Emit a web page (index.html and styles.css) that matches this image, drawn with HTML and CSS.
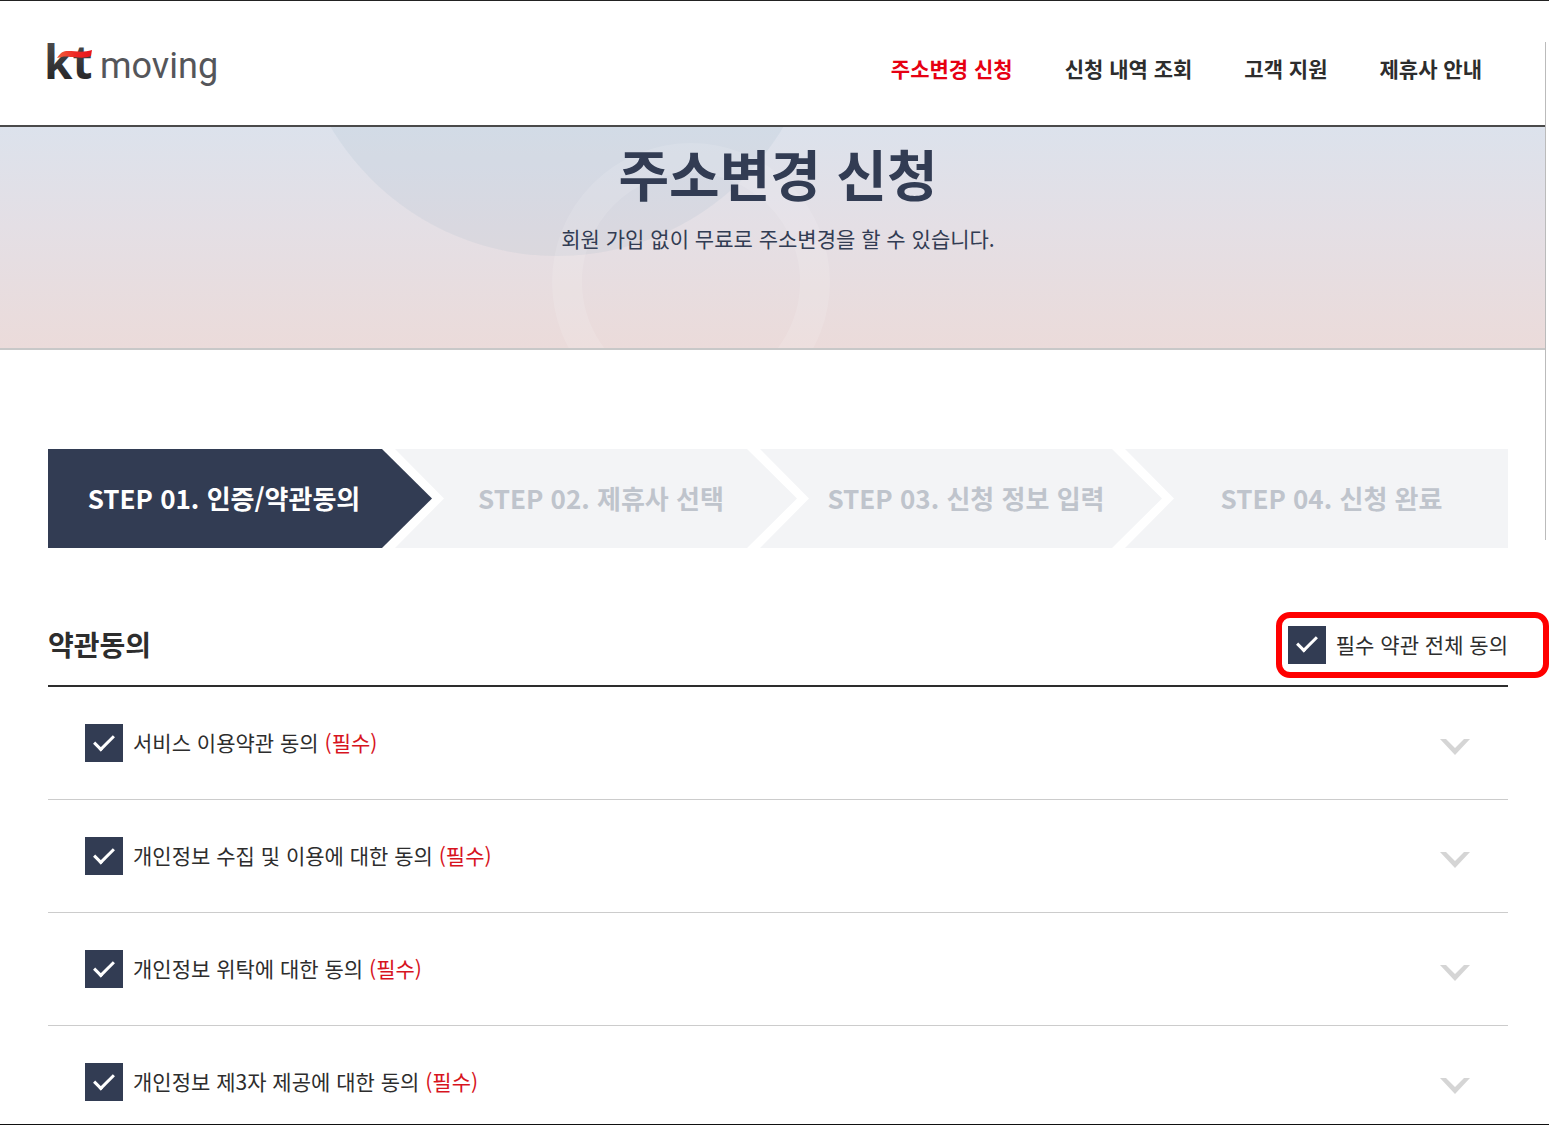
FILE: index.html
```html
<!DOCTYPE html>
<html lang="ko">
<head>
  <meta charset="UTF-8" />
  <meta name="viewport" content="width=device-width, initial-scale=1.0"/>
  <title>주소변경 신청 | kt moving</title>
  <link rel="stylesheet" href="styles.css">
</head>
<body>
  <div class="page">
    <header class="header">
      <a href="#" class="logo" aria-label="kt moving">
        <svg width="184" height="70" viewBox="0 0 184 70">
          <defs>
            <linearGradient id="ktBlack" x1="0" y1="0" x2="0" y2="1">
              <stop offset="0" stop-color="#555557"/>
              <stop offset="1" stop-color="#1c1c1e"/>
            </linearGradient>
            <linearGradient id="ktRed" x1="0" y1="0" x2="1" y2="0">
              <stop offset="0" stop-color="#f0603c"/>
              <stop offset="0.5" stop-color="#ee2a24"/>
              <stop offset="1" stop-color="#e8141c"/>
            </linearGradient>
          </defs>
          <text class="logo-kt" x="6" y="49" fill="url(#ktBlack)">kt</text>
          <path d="M19 28C23 22 25 21 30 21C38 21 45 23 54 20L53 26C46 29 38 27 32 27C27 26 24 27 19 28Z" fill="url(#ktRed)"/>
          <text class="logo-moving" x="62" y="48">moving</text>
        </svg>
      </a>
      <nav class="nav">
        <a href="#" class="active">주소변경 신청</a>
        <a href="#">신청 내역 조회</a>
        <a href="#">고객 지원</a>
        <a href="#">제휴사 안내</a>
      </nav>
    </header>

    <section class="visual">
      <svg class="visual-bg" width="1546" height="221" viewBox="0 0 1546 221" aria-hidden="true">
        <circle cx="557" cy="-134" r="263" fill="#7098b0" fill-opacity="0.09"/>
        <circle cx="691" cy="155" r="124" fill="none" stroke="#ffffff" stroke-opacity="0.12" stroke-width="30"/>
      </svg>
      <h1>주소변경 신청</h1>
      <p>회원 가입 없이 무료로 주소변경을 할 수 있습니다.</p>
    </section>

    <main class="content">
      <ol class="steps">
        <li class="step on">STEP 01. 인증/약관동의</li>
        <li class="step">STEP 02. 제휴사 선택</li>
        <li class="step">STEP 03. 신청 정보 입력</li>
        <li class="step">STEP 04. 신청 완료</li>
      </ol>

      <div class="terms-head">
        <h2>약관동의</h2>
        <div class="check check-all">
          <input type="checkbox" id="agreeAll" checked>
          <label for="agreeAll">필수 약관 전체 동의</label>
        </div>
      </div>

      <ul class="terms">
        <li>
          <div class="check">
            <input type="checkbox" id="agree1" class="agree" checked>
            <label for="agree1">서비스 이용약관 동의 <em>(필수)</em></label>
          </div>
          <button type="button" class="toggle" aria-label="서비스 이용약관 보기">
            <svg width="30" height="16" viewBox="0 0 30 16"><path d="M0 0H6L15 9L24 0H30L15 16Z"/></svg>
          </button>
        </li>
        <li>
          <div class="check">
            <input type="checkbox" id="agree2" class="agree" checked>
            <label for="agree2">개인정보 수집 및 이용에 대한 동의 <em>(필수)</em></label>
          </div>
          <button type="button" class="toggle" aria-label="개인정보 수집 및 이용 보기">
            <svg width="30" height="16" viewBox="0 0 30 16"><path d="M0 0H6L15 9L24 0H30L15 16Z"/></svg>
          </button>
        </li>
        <li>
          <div class="check">
            <input type="checkbox" id="agree3" class="agree" checked>
            <label for="agree3">개인정보 위탁에 대한 동의 <em>(필수)</em></label>
          </div>
          <button type="button" class="toggle" aria-label="개인정보 위탁 보기">
            <svg width="30" height="16" viewBox="0 0 30 16"><path d="M0 0H6L15 9L24 0H30L15 16Z"/></svg>
          </button>
        </li>
        <li>
          <div class="check">
            <input type="checkbox" id="agree4" class="agree" checked>
            <label for="agree4">개인정보 제3자 제공에 대한 동의 <em>(필수)</em></label>
          </div>
          <button type="button" class="toggle" aria-label="개인정보 제3자 제공 보기">
            <svg width="30" height="16" viewBox="0 0 30 16"><path d="M0 0H6L15 9L24 0H30L15 16Z"/></svg>
          </button>
        </li>
      </ul>
    </main>
  </div>
  <div class="scroll-thumb"></div>

  <script>
    const agreeAll = document.getElementById('agreeAll');
    const agrees = document.querySelectorAll('.agree');

    agreeAll.addEventListener('change', () => {
      agrees.forEach(box => box.checked = agreeAll.checked);
    });

    agrees.forEach(box => box.addEventListener('change', () => {
      agreeAll.checked = [...agrees].every(b => b.checked);
    }));
  </script>
</body>
</html>
```
FILE: styles.css
```css
* {
  box-sizing: border-box;
}

body {
  margin: 0;
  background-color: #fff;
  color: #2d2d2d;
  font-family: 'Noto Sans CJK KR', sans-serif;
  font-size: 21px;
  line-height: 30px;
}

h1, h2, p, ul, ol {
  margin: 0;
  padding: 0;
}

li {
  list-style: none;
}

a {
  color: inherit;
  text-decoration: none;
}

/* scroll area, framed above and below */
.page {
  height: 100vh;
  padding-right: 3px;
  overflow-y: auto;
  scrollbar-width: none;
  border-top: 1px solid #222;
  border-bottom: 1px solid #111;
}

.header {
  display: flex;
  justify-content: space-between;
  align-items: center;
  height: 126px;
  padding: 10px 64px 0 38px;
  border-bottom: 2px solid #4a4a4a;
}

.logo {
  padding-bottom: 6px;
}

.logo svg {
  display: block;
}

.logo-kt {
  font-family: 'Open Sans', sans-serif;
  font-size: 46px;
  font-weight: 700;
}

.logo-moving {
  font-family: Roboto, sans-serif;
  font-size: 36px;
  fill: #55565a;
}

.nav {
  display: flex;
  gap: 52px;
  font-weight: 700;
}

.nav .active {
  color: #e60012;
}

/* top banner */
.visual {
  position: relative;
  height: 223px;
  padding-top: 8px;
  overflow: hidden;
  text-align: center;
  color: #323c53;
  background: linear-gradient(#dce2ec, #e4dfe5 45%, #ebdbda);
  border-bottom: 2px solid #c8c8c8;
}

.visual-bg {
  position: absolute;
  top: 0;
  left: 50%;
  transform: translateX(-50%);
}

.visual h1,
.visual p {
  position: relative;
  padding-left: 10px;
}

.visual h1 {
  font-size: 55px;
  line-height: 74px;
  font-weight: 700;
}

.visual p {
  margin-top: 14px;
}

.content {
  padding: 99px 38px 0 48px;
}

/* steps */
.steps {
  display: flex;
}

.step {
  flex: 1 1 402px;
  height: 99px;
  margin-left: -37px;
  padding: 0 0 2px 10px;
  display: flex;
  justify-content: center;
  align-items: center;
  font-size: 26px;
  font-weight: 700;
  white-space: nowrap;
  color: #bfc4cc;
  background-color: #f3f4f6;
  clip-path: polygon(0 0, calc(100% - 50px) 0, 100% 50%, calc(100% - 50px) 100%, 0 100%, 49px 50%);
}

.step:first-child {
  flex-basis: 384px;
  margin-left: 0;
  padding: 0 32px 2px 0;
  clip-path: polygon(0 0, calc(100% - 50px) 0, 100% 50%, calc(100% - 50px) 100%, 0 100%);
}

.step:last-child {
  flex-basis: 383px;
  padding-left: 30px;
  clip-path: polygon(0 0, 100% 0, 100% 100%, 0 100%, 49px 50%);
}

.step.on {
  color: #fff;
  background-color: #323c53;
}

/* terms */
.terms-head {
  display: flex;
  justify-content: space-between;
  align-items: center;
  margin-top: 56px;
  height: 83px;
  border-bottom: 2px solid #2d2d2d;
}

.terms-head h2 {
  padding-bottom: 2px;
  font-size: 28px;
  font-weight: 700;
}

.check {
  display: flex;
  align-items: center;
  gap: 10px;
}

.check input {
  appearance: none;
  width: 38px;
  height: 38px;
  margin: 0;
  display: grid;
  place-items: center;
  border: 1px solid #323c53;
  cursor: pointer;
}

.check input:checked {
  background-color: #323c53;
}

.check input:checked::after {
  content: "";
  width: 17px;
  height: 8px;
  margin-bottom: 6px;
  border-left: 3px solid #fff;
  border-bottom: 3px solid #fff;
  transform: rotate(-45deg);
}

.check label {
  padding-bottom: 2px;
  cursor: pointer;
}

.check em {
  font-style: normal;
  color: #d7141e;
}

/* the outline hangs past the column on the right */
.check-all {
  margin-right: -41px;
  height: 66px;
  padding: 0 35px 0 6px;
  border: 6px solid #ff0000;
  border-radius: 14px;
}

.terms li {
  display: flex;
  justify-content: space-between;
  align-items: center;
  min-height: 113px;
  padding: 0 38px 0 37px;
  border-bottom: 1px solid #ccc;
}

.toggle {
  padding: 8px 0 0;
  border: none;
  background: none;
  cursor: pointer;
}

.toggle svg {
  display: block;
  fill: #d5d5d5;
}

.scroll-thumb {
  position: absolute;
  top: 42px;
  right: 3px;
  width: 1px;
  height: 498px;
  background-color: #bbb;
}
```
